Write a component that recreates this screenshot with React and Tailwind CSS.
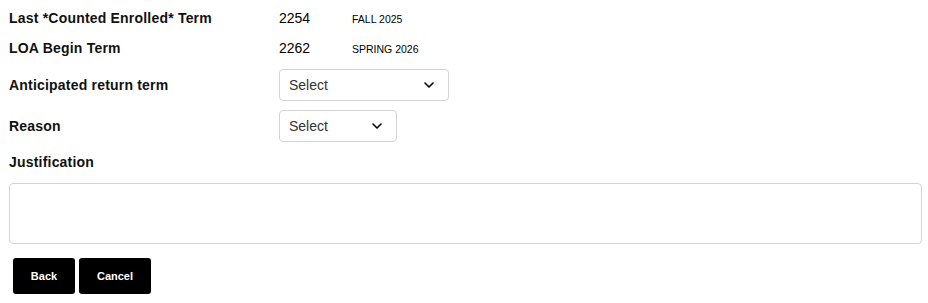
const font = { fontFamily: '"Liberation Sans", Arial, sans-serif' };

function Chevron() {
  return (
    <svg width="10" height="6" viewBox="0 0 10 6" fill="none" className="shrink-0">
      <path d="M1 1l4 4 4-4" stroke="#000" strokeWidth="1.6" strokeLinecap="round" strokeLinejoin="round" />
    </svg>
  );
}

function SelectBox({ width }) {
  return (
    <div
      className={`${width} h-[32px] flex items-center justify-between pl-[9px] pr-[14px] border border-[#d4d4d4] rounded-[4px] bg-white text-[14px] text-[#333]`}
    >
      <span>Select</span>
      <Chevron />
    </div>
  );
}

function Row({ label, children, className = "" }) {
  return (
    <div className={`flex items-center ${className}`}>
      <div className="w-[270px] text-[14px] font-bold tracking-[0.2px] text-[#111]">{label}</div>
      {children}
    </div>
  );
}

function TermValue({ code, name }) {
  return (
    <div className="flex items-baseline">
      <span className="w-[73px] text-[14px] text-black">{code}</span>
      <span className="text-[10.5px] font-medium text-black">{name}</span>
    </div>
  );
}

export default function App() {
  return (
    <div className="w-[928px] h-[303px] bg-white pt-[3px] pl-[9px] pr-[6px]" style={font}>
      <Row label="Last *Counted Enrolled* Term" className="h-[30px]">
        <TermValue code="2254" name="FALL 2025" />
      </Row>
      <Row label="LOA Begin Term" className="h-[30px]">
        <TermValue code="2262" name="SPRING 2026" />
      </Row>
      <Row label="Anticipated return term" className="h-[32px] mt-[6px]">
        <SelectBox width="w-[170px]" />
      </Row>
      <Row label="Reason" className="h-[32px] mt-[9px]">
        <SelectBox width="w-[118px]" />
      </Row>
      <div className="mt-[12px] h-[16px] leading-[16px] text-[14px] font-bold tracking-[0.2px] text-[#111]">Justification</div>
      <textarea className="block mt-[13px] w-full h-[61px] border border-[#d4d4d4] rounded-[4px] resize-none outline-none" />
      <div className="flex gap-[4px] mt-[14px] ml-[4px]">
        <button className="w-[62px] h-[36px] bg-black text-white text-[11px] font-bold rounded-[3px]">Back</button>
        <button className="w-[72px] h-[36px] bg-black text-white text-[11px] font-bold rounded-[3px]">Cancel</button>
      </div>
    </div>
  );
}
